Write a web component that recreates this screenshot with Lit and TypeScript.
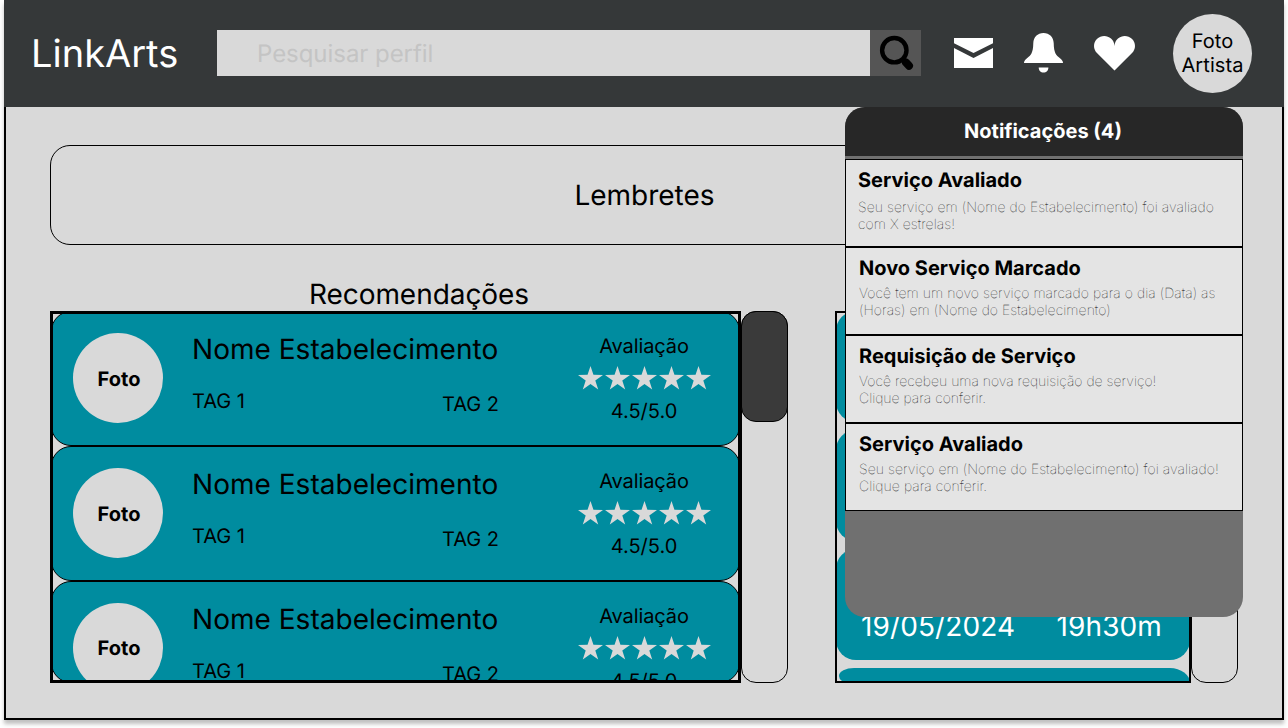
import { LitElement, html, css, svg } from "lit";
import { customElement, property } from "lit/decorators.js";

const STAR = "M12.5 0 L15.45 8.75 L25 8.9 L17.3 14.6 L20.2 23.6 L12.5 18.1 L4.8 23.6 L7.7 14.6 L0 8.9 L9.55 8.75 Z";

@customElement("venue-card")
class VenueCard extends LitElement {
  @property() name = "";
  @property({ type: Array }) tags: string[] = [];
  @property() score = "";

  static styles = css`
    :host { display: flex; box-sizing: border-box; height: 135px; flex: none; padding: 21px 0 0 21px; border: 1px solid #000; border-radius: 20px; background: #008c9f; color: #000; }
    .photo { flex: none; width: 90px; height: 90px; border-radius: 50%; background: #d9d9d9; display: flex; align-items: center; justify-content: center; font-weight: 700; font-size: 20px; padding-left: 2px; padding-top: 1px; box-sizing: border-box; }
    :host(.last) .photo { padding-top: 0; padding-bottom: 1px; }
    .info { margin-left: 29px; width: 307px; }
    .name { font-size: 28px; line-height: 34px; margin-top: -1px; white-space: nowrap; letter-spacing: 0.03px; }
    .tags { display: flex; justify-content: space-between; font-size: 20px; line-height: 24px; margin-top: 23px; }
    .second { margin-top: 3px; }
    .rating { margin-left: 78px; width: 134px; display: flex; flex-direction: column; align-items: center; font-size: 20px; line-height: 24px; padding-top: 1px; }
    .label { letter-spacing: -0.1px; }
    .stars { display: flex; gap: 2px; height: 24px; margin: 8px 0 9px; }
    .stars svg { width: 25px; height: 24px; fill: #d9d9d9; }
  `;

  render() {
    return html`
      <div class="photo">Foto</div>
      <div class="info">
        <div class="name">${this.name}</div>
        <div class="tags"><span>${this.tags[0]}</span><span class="second">${this.tags[1]}</span></div>
      </div>
      <div class="rating">
        <span class="label">Avaliação</span>
        <div class="stars">
          ${[0, 1, 2, 3, 4].map(() => html`<svg viewBox="0 0 25 24">${svg`<path d=${STAR} />`}</svg>`)}
        </div>
        <span>${this.score}</span>
      </div>
    `;
  }
}

const NOTES = [
  { title: "Serviço Avaliado", lines: ["Seu serviço em (Nome do Estabelecimento) foi avaliado", "com X estrelas!"] },
  { title: "Novo Serviço Marcado", lines: ["Você tem um novo serviço marcado para o dia (Data) as", "(Horas) em (Nome do Estabelecimento)"] },
  { title: "Requisição de Serviço", lines: ["Você recebeu uma nova requisição de serviço!", "Clique para conferir."] },
  { title: "Serviço Avaliado", lines: ["Seu serviço em (Nome do Estabelecimento) foi avaliado!", "Clique para conferir."] },
];

@customElement("notification-panel")
class NotificationPanel extends LitElement {
  static styles = css`
    :host { display: block; background: #707070; border-radius: 20px; overflow: hidden; }
    .head { box-sizing: border-box; height: 49px; background: #272727; color: #fff; font-weight: 700; font-size: 20px; line-height: 48px; text-align: center; margin-bottom: 3px; padding-right: 2px; }
    .note { box-sizing: border-box; height: 88px; border: 1px solid #000; background: #e4e4e4; padding: 8px 0 0 13px; }
    .note:nth-child(2) { padding-left: 12px; }
    .title { font-weight: 700; font-size: 20px; line-height: 24px; color: #000; }
    .text { font-weight: 100; font-size: 14px; line-height: 17px; color: #000; white-space: nowrap; margin-top: 5px; letter-spacing: 0.07px; }
    .note:nth-child(2) .text { margin-top: 7px; }
    .note:nth-child(4) .text { letter-spacing: 0.02px; }
  `;

  render() {
    return html`
      <div class="head"><span>Notificações (${NOTES.length})</span></div>
      ${NOTES.map((n) => html`
        <div class="note">
          <div class="title">${n.title}</div>
          <div class="text">${n.lines[0]}<br />${n.lines[1]}</div>
        </div>`)}
    `;
  }
}

@customElement("app-root")
class AppRoot extends LitElement {
  static styles = css`
    :host { display: block; width: 1288px; height: 728px; overflow: hidden; background: #fff; font-family: Inter, "Liberation Sans", sans-serif; color: #000; text-rendering: geometricPrecision; }
    .frame { position: relative; box-sizing: border-box; width: 1280px; height: 720px; margin-left: 4px; background: #d9d9d9; border: 2px solid #000; border-top: 0; box-shadow: 0 4px 4px rgba(0, 0, 0, 0.25); }
    .bar { box-sizing: border-box; height: 107px; margin: 0 -2px; padding: 0 32px 0 27px; background: #353839; display: flex; align-items: center; }
    .brand { width: 186px; color: #fff; font-size: 38px; line-height: 46px; white-space: nowrap; }
    .search { display: flex; height: 46px; width: 704px; margin-bottom: 1px; }
    .field { flex: 1; background: #d9d9d9; color: #c4c4c4; font-size: 24px; line-height: 47px; padding-left: 40px; letter-spacing: -0.05px; }
    .go { width: 51px; background: #555; }
    .go svg { display: block; }
    .icons { display: flex; margin-left: 32px; gap: 29px; height: 40px; margin-bottom: 1px; }
    .icons svg { display: block; width: 41px; height: 40px; fill: #fff; }
    .icons .heart { margin-left: 1px; }
    .me { box-sizing: border-box; margin-left: auto; width: 79px; height: 79px; border-radius: 50%; background: #d9d9d9; font-size: 20px; line-height: 24px; text-align: center; display: flex; align-items: center; justify-content: center; padding-bottom: 2px; letter-spacing: 0.1px; }
    .body { padding: 38px 44px 0; }
    .reminders { box-sizing: border-box; height: 100px; border: 1px solid #000; border-radius: 20px; font-size: 28px; line-height: 98px; text-align: center; padding-left: 1px; }
    .columns { display: flex; margin-top: 32px; }
    .col { width: 738px; margin-right: 47px; }
    .heading { height: 34px; line-height: 34px; font-size: 28px; text-align: center; letter-spacing: -0.05px; }
    .scroller { display: flex; height: 372px; }
    .list { box-sizing: border-box; width: 691px; border: 3px solid #000; overflow: hidden; }
    .cards { display: flex; flex-direction: column; margin: -3px -2px 0; }
    .cards .last { height: 102px; }
    .track { box-sizing: border-box; width: 47px; border: 1px solid #000; border-radius: 15px; }
    .thumb { box-sizing: border-box; height: 111px; margin: -1px; border: 1px solid #000; border-radius: 15px; background: #3a3a3a; }
    .agenda { box-sizing: border-box; width: 356px; border: 2px solid #000; overflow: hidden; }
    .slots { display: flex; flex-direction: column; gap: 8px; margin: -2px -1px 0; }
    .slot { box-sizing: border-box; height: 111px; border-radius: 20px; background: #008c9f; color: #fff; font-size: 28px; line-height: 34px; letter-spacing: 0.1px; padding: 60px 28px 0 25px; display: flex; justify-content: space-between; }
    .slot.cut { height: 15px; padding: 0; margin-left: 3px; border-radius: 15px 20px 0 10px / 8px 15px 0 7px; }
    .panel { position: absolute; left: 839px; top: 107px; width: 398px; height: 510px; }
  `;

  render() {
    const dates = [0, 1, 2];
    return html`
      <div class="frame">
        <div class="bar">
          <div class="brand">LinkArts</div>
          <div class="search">
            <div class="field">Pesquisar perfil</div>
            <div class="go">
              <svg width="51" height="46" viewBox="0 0 51 46">
                <circle cx="24.3" cy="20.2" r="12.2" fill="none" stroke="#000" stroke-width="4.4" />
                <path d="M32 28 L36 32" stroke="#000" stroke-width="4" />
                <path d="M36 32.6 L39 35.8" stroke="#000" stroke-width="8" stroke-linecap="round" />
              </svg>
            </div>
          </div>
          <div class="icons">
            <svg viewBox="0 0 41 40"><path d="M1 5H40V10.2L20.5 20L1 10.2ZM1 15L20.5 25L40 15V35H1Z" /></svg>
            <svg viewBox="0 0 41 40"><path d="M20.5 0C26.5 0 30.5 4.2 30.7 10C30.9 20 33 22 37 25.3C39.2 27.2 40 28.5 40 30H1C1 28.5 1.8 27.2 4 25.3C8 22 10.1 20 10.3 10C10.5 4.2 14.5 0 20.5 0ZM15.7 34.5H25.4C25.4 37.5 23.4 39.5 20.5 39.5C17.7 39.5 15.7 37.5 15.7 34.5Z" /></svg>
            <svg class="heart" viewBox="0 0 41 40"><path d="M20.5 37.5L3.2 20.3C-1 16 -1 10 2.9 6C7 2 13 2 17 5.5C19.2 7.5 20.3 9.8 20.5 13C20.7 9.8 21.8 7.5 24 5.5C28 2 34 2 38.1 6C42 10 42 16 37.8 20.3Z" /></svg>
          </div>
          <div class="me">Foto<br />Artista</div>
        </div>
        <div class="body">
          <div class="reminders">Lembretes</div>
          <div class="columns">
            <div class="col">
              <div class="heading">Recomendações</div>
              <div class="scroller">
                <div class="list">
                  <div class="cards">
                    ${[0, 1, 2].map((i) => html`<venue-card class=${i === 2 ? "last" : ""} name="Nome Estabelecimento" .tags=${["TAG 1", "TAG 2"]} score="4.5/5.0"></venue-card>`)}
                  </div>
                </div>
                <div class="track"><div class="thumb"></div></div>
              </div>
            </div>
            <div>
              <div class="heading"></div>
              <div class="scroller">
                <div class="agenda">
                  <div class="slots">
                    ${dates.map(() => html`<div class="slot"><span>19/05/2024</span><span>19h30m</span></div>`)}
                    <div class="slot cut"></div>
                  </div>
                </div>
                <div class="track"></div>
              </div>
            </div>
          </div>
        </div>
        <notification-panel class="panel"></notification-panel>
      </div>
    `;
  }
}
